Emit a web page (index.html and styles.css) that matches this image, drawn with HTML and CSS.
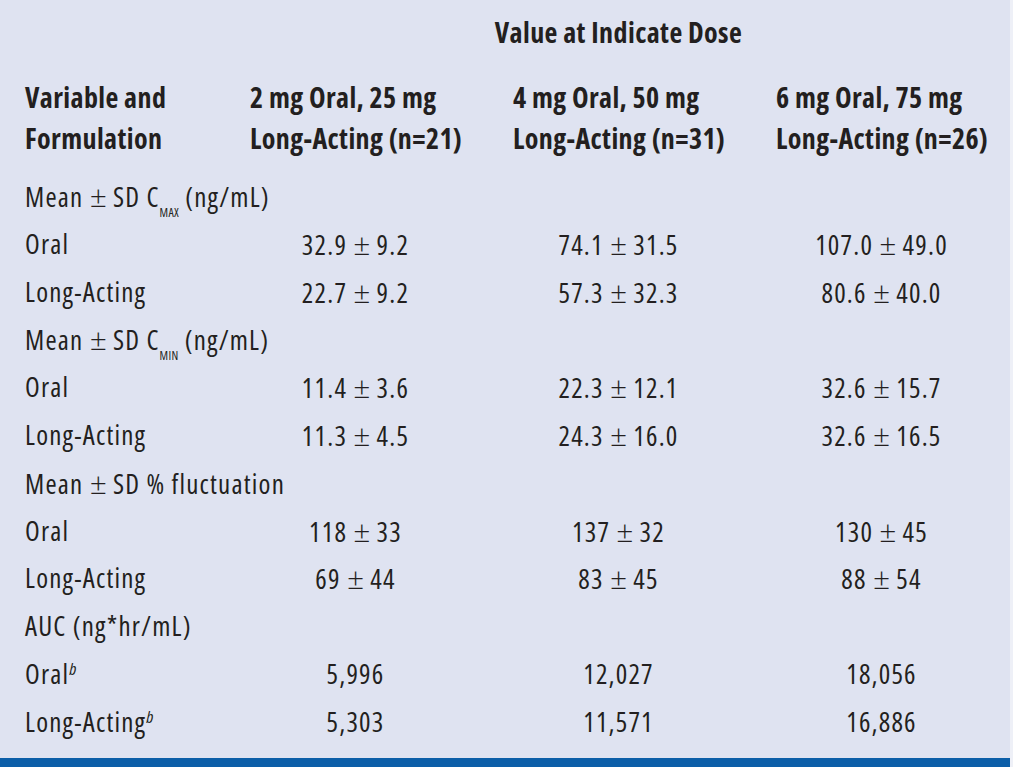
FILE: index.html
```html
<!DOCTYPE html>
<html>
<head>
<meta charset="utf-8">
<link rel="stylesheet" href="styles.css">
</head>
<body>
<div class="page">
  <div class="table">
    <div class="title-row">
      <div class="spacer"></div>
      <div class="title">Value at Indicate Dose</div>
    </div>
    <div class="head-row">
      <div class="hcell">Variable and<br>Formulation</div>
      <div class="hcell">2 mg Oral, 25 mg<br>Long-Acting (n=21)</div>
      <div class="hcell">4 mg Oral, 50 mg<br>Long-Acting (n=31)</div>
      <div class="hcell">6 mg Oral, 75 mg<br>Long-Acting (n=26)</div>
    </div>
    <div class="row"><div class="label">Mean <span class="pm">±</span> SD C<sub>MAX</sub> (ng/mL)</div></div>
    <div class="row"><div class="label">Oral</div><div class="val">32.9 <span class="pm">±</span> 9.2</div><div class="val">74.1 <span class="pm">±</span> 31.5</div><div class="val">107.0 <span class="pm">±</span> 49.0</div></div>
    <div class="row"><div class="label">Long-Acting</div><div class="val">22.7 <span class="pm">±</span> 9.2</div><div class="val">57.3 <span class="pm">±</span> 32.3</div><div class="val">80.6 <span class="pm">±</span> 40.0</div></div>
    <div class="row"><div class="label">Mean <span class="pm">±</span> SD C<sub>MIN</sub> (ng/mL)</div></div>
    <div class="row"><div class="label">Oral</div><div class="val">11.4 <span class="pm">±</span> 3.6</div><div class="val">22.3 <span class="pm">±</span> 12.1</div><div class="val">32.6 <span class="pm">±</span> 15.7</div></div>
    <div class="row"><div class="label">Long-Acting</div><div class="val">11.3 <span class="pm">±</span> 4.5</div><div class="val">24.3 <span class="pm">±</span> 16.0</div><div class="val">32.6 <span class="pm">±</span> 16.5</div></div>
    <div class="row"><div class="label">Mean <span class="pm">±</span> SD % fluctuation</div></div>
    <div class="row"><div class="label">Oral</div><div class="val">118 <span class="pm">±</span> 33</div><div class="val">137 <span class="pm">±</span> 32</div><div class="val">130 <span class="pm">±</span> 45</div></div>
    <div class="row"><div class="label">Long-Acting</div><div class="val">69 <span class="pm">±</span> 44</div><div class="val">83 <span class="pm">±</span> 45</div><div class="val">88 <span class="pm">±</span> 54</div></div>
    <div class="row"><div class="label">AUC (ng*hr/mL)</div></div>
    <div class="row"><div class="label">Oral<sup>b</sup></div><div class="val">5,996</div><div class="val">12,027</div><div class="val">18,056</div></div>
    <div class="row"><div class="label">Long-Acting<sup>b</sup></div><div class="val">5,303</div><div class="val">11,571</div><div class="val">16,886</div></div>
  </div>
  <div class="bar"></div>
</div>
</body>
</html>
```
FILE: styles.css
```css
html, body {
  margin: 0;
  padding: 0;
}
body {
  background: #dfe3f1;
  color: #231f20;
  font-family: "Open Sans", "DejaVu Sans", sans-serif;
  font-stretch: 75%;
  font-size: 27px;
  letter-spacing: 1.2px;
  width: 1013px;
  height: 767px;
  overflow: hidden;
}
.page {
  width: 1010px;
  height: 767px;
  border-right: 3px solid #eef0f7;
  display: flex;
  flex-direction: column;
}
.table {
  flex: 1;
  padding-left: 25px;
}
.title-row,
.head-row,
.row {
  display: grid;
  grid-template-columns: 225px 263px 263px 263px;
}
.title-row,
.head-row {
  font-weight: 700;
  font-size: 28px;
  letter-spacing: 0.4px;
}
.title-row {
  height: 64px;
  align-items: center;
}
.title {
  grid-column: 2 / 5;
  width: 737px;
  text-align: center;
}
.head-row {
  margin-top: 13px;
  height: 82px;
  line-height: 41px;
  margin-bottom: 13px;
  white-space: nowrap;
}
.row {
  height: 47.8px;
  line-height: 47.8px;
  white-space: nowrap;
}
.val {
  width: 211px;
  text-align: center;
}
.pm {
  font-size: 30px;
  font-stretch: 100%;
  font-weight: 300;
  letter-spacing: 0;
}
sub {
  font-size: 12px;
  letter-spacing: 0.3px;
  vertical-align: -10px;
  line-height: 0;
}
sup {
  font-size: 17px;
  font-style: italic;
  vertical-align: 9px;
  line-height: 0;
}
.bar {
  height: 9px;
  background: #0b5ea8;
}
```
